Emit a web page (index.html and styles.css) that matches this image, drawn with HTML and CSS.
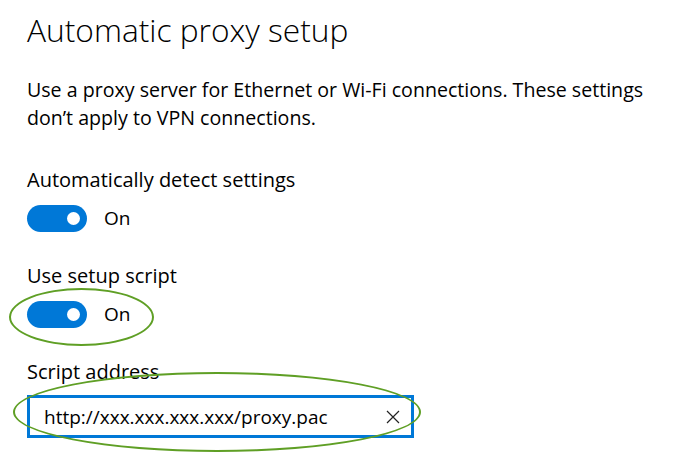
FILE: index.html
```html
<!DOCTYPE html>
<html>
<head>
<meta charset="utf-8">
<link rel="stylesheet" href="styles.css">
</head>
<body>
<main class="page">
  <h1 class="title">Automatic proxy setup</h1>
  <p class="desc">Use a proxy server for Ethernet or Wi-Fi connections. These settings don’t apply to VPN connections.</p>

  <section class="setting">
    <div class="label">Automatically detect settings</div>
    <div class="toggle-row">
      <span class="toggle"><span class="knob"></span></span>
      <span class="state">On</span>
    </div>
  </section>

  <section class="setting">
    <div class="label">Use setup script</div>
    <div class="toggle-row highlighted">
      <span class="toggle"><span class="knob"></span></span>
      <span class="state">On</span>
      <span class="ring ring-toggle"></span>
    </div>
  </section>

  <section class="setting">
    <div class="label">Script address</div>
    <div class="field-wrap">
      <div class="field">
        <span class="value">http://xxx.xxx.xxx.xxx/proxy.pac</span>
        <svg class="clear" width="14" height="14" viewBox="0 0 14 14"><path d="M1 1 L13 13 M13 1 L1 13" stroke="#222" stroke-width="1.2" fill="none"/></svg>
      </div>
      <span class="ring ring-field"></span>
    </div>
  </section>
</main>
</body>
</html>
```

FILE: styles.css
```css
html, body {
  margin: 0;
  padding: 0;
  background: #ffffff;
}
body {
  font-family: "Open Sans", "Noto Sans", sans-serif;
  color: #000;
  width: 690px;
  height: 455px;
  overflow: hidden;
}
.page {
  padding: 8px 0 0 27px;
}
.title {
  margin: 0;
  font-weight: 300;
  font-size: 31.7px;
  line-height: 44px;
}
.desc {
  margin: 24px 0 0 0;
  padding-bottom: 4px;
  width: 640px;
  font-size: 19.6px;
  line-height: 28px;
}
.setting {
  margin-top: 31px;
}
.label {
  font-size: 20px;
  line-height: 26px;
}
.toggle-row {
  position: relative;
  display: flex;
  align-items: center;
  gap: 17px;
  margin-top: 12px;
  height: 27px;
}
.toggle {
  display: flex;
  align-items: center;
  justify-content: flex-end;
  width: 60px;
  height: 27px;
  border-radius: 14px;
  background: #0078d7;
  box-sizing: border-box;
  padding-right: 7px;
}
.knob {
  width: 13px;
  height: 13px;
  border-radius: 50%;
  background: #fff;
}
.state {
  font-size: 19px;
  line-height: 27px;
}
.ring {
  position: absolute;
  border: 2px solid #5f9f25;
  border-radius: 50%;
  pointer-events: none;
}
.ring-toggle {
  left: -18px;
  top: -13px;
  width: 141px;
  height: 54px;
}
.field-wrap {
  position: relative;
  margin-top: 10px;
  width: 387px;
}
.field {
  display: flex;
  align-items: center;
  justify-content: space-between;
  box-sizing: border-box;
  width: 387px;
  height: 43px;
  border: 3px solid #0078d7;
  padding: 0 11px 0 14px;
}
.value {
  font-size: 19px;
}
.clear {
  display: block;
}
.ring-field {
  left: -14px;
  top: -23px;
  width: 404px;
  height: 76px;
}
```
